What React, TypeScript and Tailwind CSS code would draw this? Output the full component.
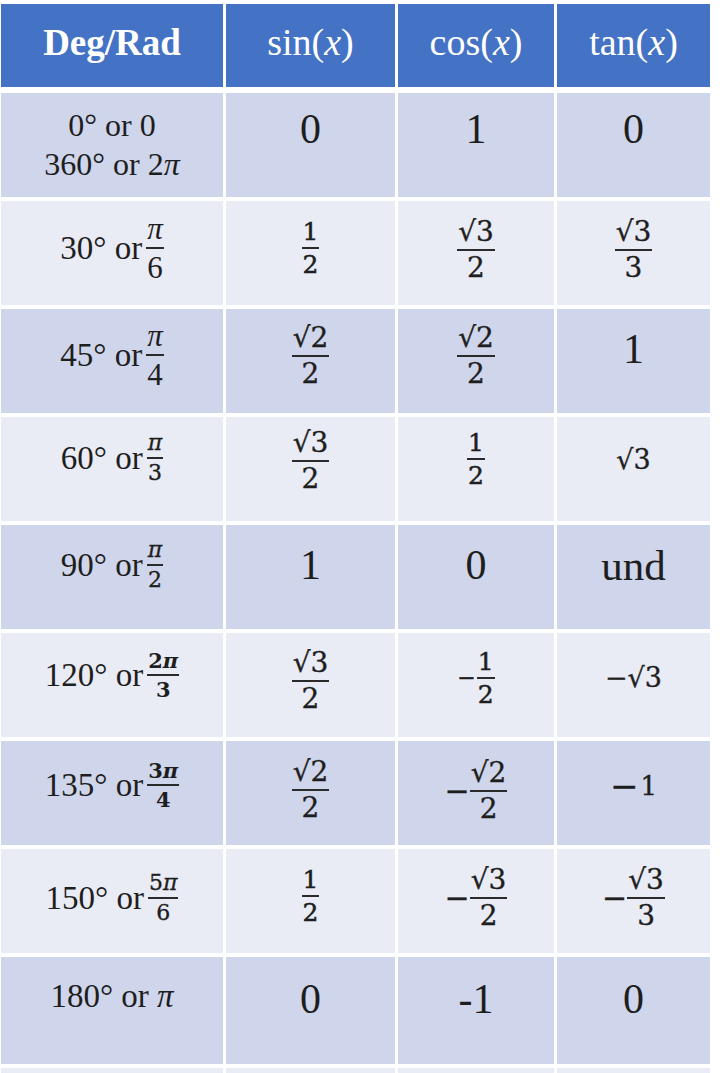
import React from "react";

const COLS = "grid grid-cols-[222px_169px_156px_153px] gap-x-[3px]";

function Frac({ n, d, cls = "", bar = "h-[2px]" }: { n: React.ReactNode; d: React.ReactNode; cls?: string; bar?: string }) {
  return (
    <span className={`inline-flex flex-col items-center ${cls}`}>
      <span className="leading-none px-[1px]">{n}</span>
      <span className={`block ${bar} w-full bg-[#2a2a2a] my-[3px]`} />
      <span className="leading-none px-[1px]">{d}</span>
    </span>
  );
}

function Cell({ bg, cls = "", children }: { bg: string; cls?: string; children?: React.ReactNode }) {
  return <div className={`flex items-center justify-center ${bg} ${cls}`}>{children}</div>;
}

const Pi = () => <span className="italic">π</span>;

function Label({ deg, frac }: { deg: string; frac: React.ReactNode }) {
  return (
    <span className="flex items-center text-[33px] leading-none whitespace-nowrap">
      <span>{deg}° or</span>
      <span className="ml-[4px] flex items-center">{frac}</span>
    </span>
  );
}

const Big = ({ t, cls = "text-[42px]" }: { t: string; cls?: string }) => (
  <span className={`${cls} leading-none`}>{t}</span>
);

const DJ = "font-['DejaVu_Serif',serif] [-webkit-text-stroke:0.35px_#1e1e1e]";

const BigFrac = ({ n, d }: { n: React.ReactNode; d: React.ReactNode }) => (
  <Frac n={n} d={d} cls="text-[28px] font-['DejaVu_Serif',serif] [-webkit-text-stroke:0.35px_#1e1e1e]" />
);
const SmallFrac = ({ n, d }: { n: React.ReactNode; d: React.ReactNode }) => (
  <Frac n={n} d={d} cls="text-[25px] font-['DejaVu_Serif',serif] [-webkit-text-stroke:0.5px_#1e1e1e]" />
);
const LabelFrac = ({ n, d, bold = false }: { n: React.ReactNode; d: React.ReactNode; bold?: boolean }) => (
  <Frac
    n={n}
    d={d}
    cls={
      bold
        ? "text-[21px] font-bold font-['DejaVu_Serif',serif]"
        : "text-[22px] font-['DejaVu_Serif',serif] [-webkit-text-stroke:0.35px_#1e1e1e]"
    }
  />
);

const DARK = "bg-[#CFD5EA]";
const LIGHT = "bg-[#E9EBF5]";

export default function App() {
  return (
    <div className="w-[720px] h-[1073px] overflow-hidden bg-white pl-[1px] pt-[4px] font-['Liberation_Serif','DejaVu_Serif',serif] text-[#1e1e1e]">
      <div className="flex flex-col gap-[4px]">
        {/* Header */}
        <div className={`${COLS} h-[83px] mb-[2px] text-white`}>
          <Cell bg="bg-[#4472C4]" cls="pb-[7px]">
            <span className="text-[37px] font-bold leading-none">Deg/Rad</span>
          </Cell>
          <Cell bg="bg-[#4472C4]" cls="pb-[7px]">
            <span className="text-[38px] leading-none">
              sin(<span className="italic">x</span>)
            </span>
          </Cell>
          <Cell bg="bg-[#4472C4]" cls="pb-[7px]">
            <span className="text-[38px] leading-none">
              cos(<span className="italic">x</span>)
            </span>
          </Cell>
          <Cell bg="bg-[#4472C4]" cls="pb-[7px]">
            <span className="text-[38px] leading-none">
              tan(<span className="italic">x</span>)
            </span>
          </Cell>
        </div>

        {/* 0 / 360 */}
        <div className={`${COLS} h-[104px]`}>
          <Cell bg={DARK}>
            <span className="flex flex-col items-center text-[32px] leading-[39px]">
              <span>0° or 0</span>
              <span>
                360° or 2<Pi />
              </span>
            </span>
          </Cell>
          <Cell bg={DARK} cls="pb-[32px]">
            <Big t="0" />
          </Cell>
          <Cell bg={DARK} cls="pb-[32px]">
            <Big t="1" />
          </Cell>
          <Cell bg={DARK} cls="pb-[32px]">
            <Big t="0" />
          </Cell>
        </div>

        {/* 30 */}
        <div className={`${COLS} h-[104px]`}>
          <Cell bg={LIGHT} cls="pb-[10px]">
            <Label deg="30" frac={<Frac n={<Pi />} d="6" cls="text-[31px]" />} />
          </Cell>
          <Cell bg={LIGHT} cls="pb-[10px]">
            <SmallFrac n="1" d="2" />
          </Cell>
          <Cell bg={LIGHT} cls="pb-[6px]">
            <BigFrac n="√3" d="2" />
          </Cell>
          <Cell bg={LIGHT} cls="pb-[6px]">
            <BigFrac n="√3" d="3" />
          </Cell>
        </div>

        {/* 45 */}
        <div className={`${COLS} h-[104px]`}>
          <Cell bg={DARK} cls="pb-[12px]">
            <Label deg="45" frac={<Frac n={<Pi />} d="4" cls="text-[31px]" />} />
          </Cell>
          <Cell bg={DARK} cls="pb-[10px]">
            <BigFrac n="√2" d="2" />
          </Cell>
          <Cell bg={DARK} cls="pb-[10px]">
            <BigFrac n="√2" d="2" />
          </Cell>
          <Cell bg={DARK} cls="pb-[24px]">
            <Big t="1" />
          </Cell>
        </div>

        {/* 60 */}
        <div className={`${COLS} h-[104px]`}>
          <Cell bg={LIGHT} cls="pb-[22px]">
            <Label deg="60" frac={<LabelFrac n={<Pi />} d="3" />} />
          </Cell>
          <Cell bg={LIGHT} cls="pb-[16px]">
            <BigFrac n="√3" d="2" />
          </Cell>
          <Cell bg={LIGHT} cls="pb-[20px]">
            <SmallFrac n="1" d="2" />
          </Cell>
          <Cell bg={LIGHT} cls="pb-[20px]">
            <span className={`text-[27px] leading-none ${DJ}`}>√3</span>
          </Cell>
        </div>

        {/* 90 */}
        <div className={`${COLS} h-[104px]`}>
          <Cell bg={DARK} cls="pb-[24px]">
            <Label deg="90" frac={<LabelFrac n={<Pi />} d="2" />} />
          </Cell>
          <Cell bg={DARK} cls="pb-[24px]">
            <Big t="1" />
          </Cell>
          <Cell bg={DARK} cls="pb-[24px]">
            <Big t="0" />
          </Cell>
          <Cell bg={DARK} cls="pb-[24px]">
            <Big t="und" cls="text-[43px]" />
          </Cell>
        </div>

        {/* 120 */}
        <div className={`${COLS} h-[104px]`}>
          <Cell bg={LIGHT} cls="pb-[20px]">
            <Label
              deg="120"
              frac={
                <LabelFrac
                  bold
                  n={
                    <>
                      2<Pi />
                    </>
                  }
                  d="3"
                />
              }
            />
          </Cell>
          <Cell bg={LIGHT} cls="pb-[8px]">
            <BigFrac n="√3" d="2" />
          </Cell>
          <Cell bg={LIGHT} cls="pb-[14px]">
            <span className={`flex items-center leading-none ${DJ}`}>
              <span className="text-[22px] mr-[1px]">−</span>
              <SmallFrac n="1" d="2" />
            </span>
          </Cell>
          <Cell bg={LIGHT} cls="pb-[16px]">
            <span className={`text-[27px] leading-none ${DJ}`}>−√3</span>
          </Cell>
        </div>

        {/* 135 */}
        <div className={`${COLS} h-[104px]`}>
          <Cell bg={DARK} cls="pb-[16px]">
            <Label
              deg="135"
              frac={
                <LabelFrac
                  bold
                  n={
                    <>
                      3<Pi />
                    </>
                  }
                  d="4"
                />
              }
            />
          </Cell>
          <Cell bg={DARK} cls="pb-[6px]">
            <BigFrac n="√2" d="2" />
          </Cell>
          <Cell bg={DARK} cls="pb-[4px]">
            <span className={`flex items-center leading-none ${DJ}`}>
              <span className="text-[30px]">−</span>
              <BigFrac n="√2" d="2" />
            </span>
          </Cell>
          <Cell bg={DARK} cls="pb-[14px]">
            <span className={`flex items-center leading-none ${DJ}`}>
              <span className="text-[34px]">−</span>
              <span className="text-[26px] ml-[2px]">1</span>
            </span>
          </Cell>
        </div>

        {/* 150 */}
        <div className={`${COLS} h-[104px]`}>
          <Cell bg={LIGHT} cls="pb-[6px]">
            <Label
              deg="150"
              frac={
                <LabelFrac
                  n={
                    <>
                      5<Pi />
                    </>
                  }
                  d="6"
                />
              }
            />
          </Cell>
          <Cell bg={LIGHT} cls="pb-[10px]">
            <SmallFrac n="1" d="2" />
          </Cell>
          <Cell bg={LIGHT} cls="pb-[6px]">
            <span className={`flex items-center leading-none ${DJ}`}>
              <span className="text-[30px]">−</span>
              <BigFrac n="√3" d="2" />
            </span>
          </Cell>
          <Cell bg={LIGHT} cls="pb-[6px]">
            <span className={`flex items-center leading-none ${DJ}`}>
              <span className="text-[30px]">−</span>
              <BigFrac n="√3" d="3" />
            </span>
          </Cell>
        </div>

        {/* 180 */}
        <div className={`${COLS} h-[107px]`}>
          <Cell bg={DARK} cls="pb-[29px]">
            <span className="text-[33px] leading-none whitespace-nowrap">
              180° or <Pi />
            </span>
          </Cell>
          <Cell bg={DARK} cls="pb-[23px]">
            <Big t="0" />
          </Cell>
          <Cell bg={DARK} cls="pb-[23px]">
            <Big t="-1" />
          </Cell>
          <Cell bg={DARK} cls="pb-[23px]">
            <Big t="0" />
          </Cell>
        </div>

        {/* partial next row */}
        <div className={`${COLS} h-[104px]`}>
          <Cell bg={LIGHT} />
          <Cell bg={LIGHT} />
          <Cell bg={LIGHT} />
          <Cell bg={LIGHT} />
        </div>
      </div>
    </div>
  );
}
